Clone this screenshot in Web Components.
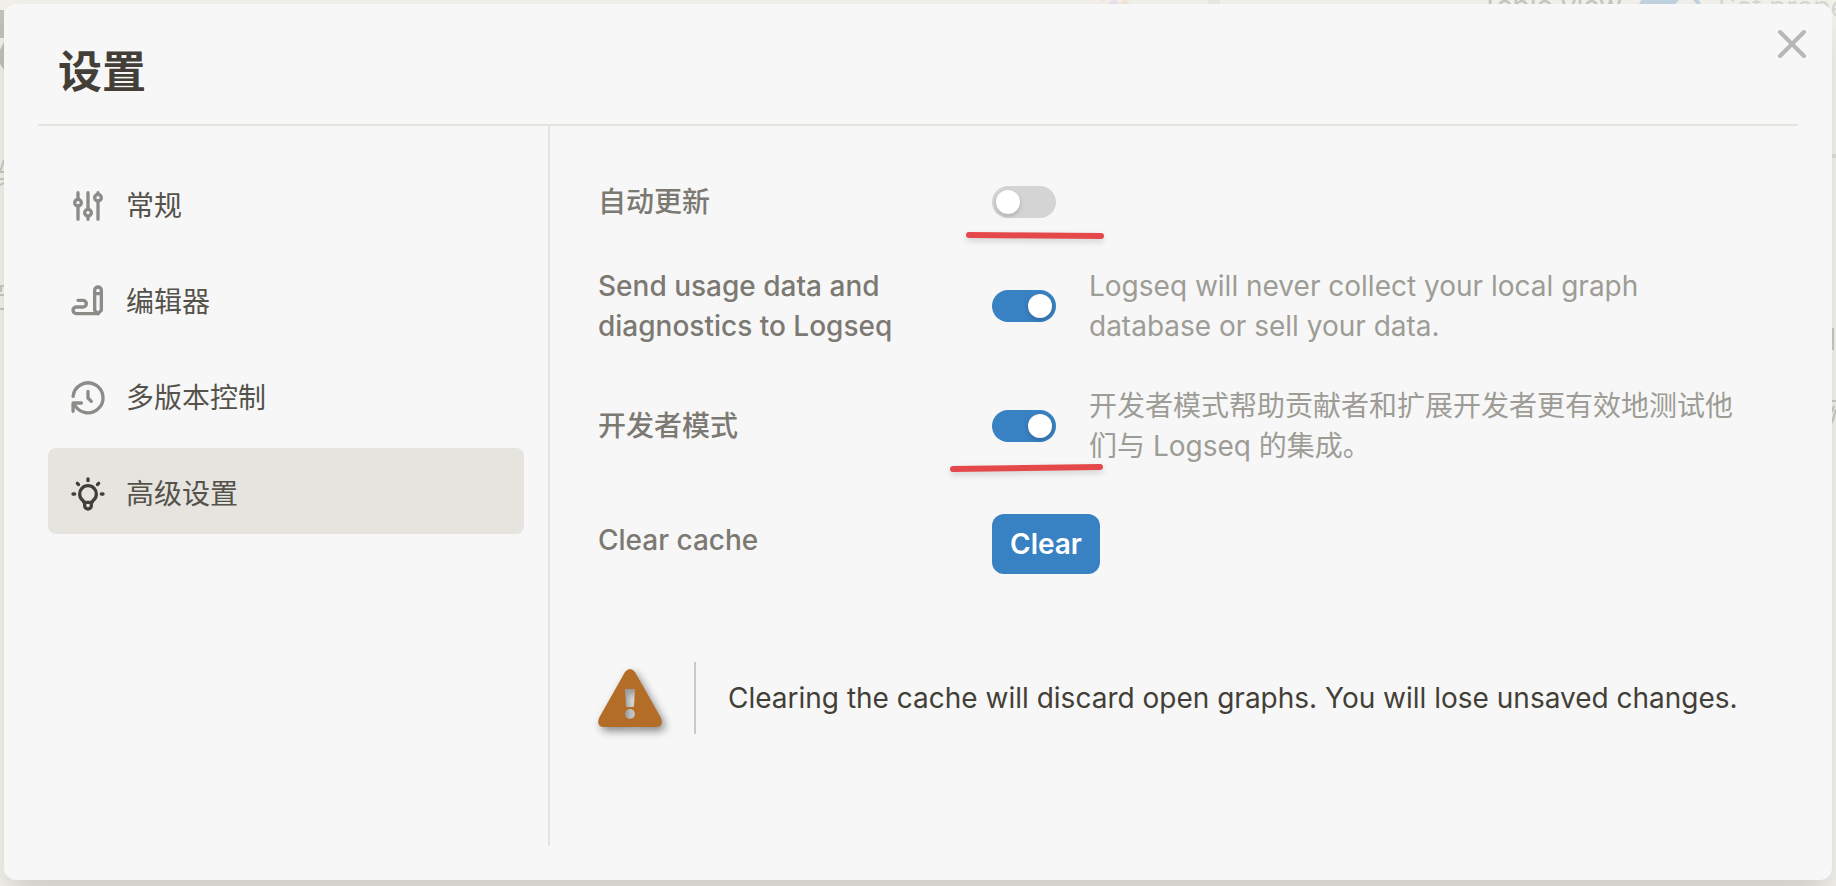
<!DOCTYPE html>
<html lang="zh-CN">
<head>
<meta charset="utf-8">
<title>设置</title>
<style>
  html, body {
    margin: 0;
    height: 100%;
    overflow: hidden;
  }

  body {
    --accent: #3881c2;
    --line: #e4e4df;
    --text: #433f38;
    --muted: #7b7972;
    background: #f1f0eb;
    color: var(--text);
    font: 28px/40px Inter, "Noto Sans CJK SC", sans-serif;
  }
</style>
</head>
<body>
<settings-app>
  <page-behind></page-behind>
  <settings-dialog heading="设置">
    <nav-item slot="nav" icon="adjustments">常规</nav-item>
    <nav-item slot="nav" icon="writing">编辑器</nav-item>
    <nav-item slot="nav" icon="history">多版本控制</nav-item>
    <nav-item slot="nav" icon="bulb" active>高级设置</nav-item>

    <setting-row label="自动更新" marker="upper"></setting-row>
    <setting-row label="Send usage data and diagnostics to Logseq" checked>Logseq will never collect your local graph database or sell your data.</setting-row>
    <setting-row label="开发者模式" marker="lower" checked>开发者模式帮助贡献者和扩展开发者更有效地测试他们与 Logseq 的集成。</setting-row>
    <action-row label="Clear cache">Clear</action-row>
    <warning-note>Clearing the cache will discard open graphs. You will lose unsaved changes.</warning-note>
  </settings-dialog>
</settings-app>

<script>
  class Base extends HTMLElement {
    constructor() {
      super();
      this.dom = this.attachShadow({ mode: "open" });
    }

    connectedCallback() {
      const template = document.createElement("template");
      template.innerHTML = this.render();
      this.dom.replaceChildren(template.content.cloneNode(true));
    }
  }

  const icons = {
    adjustments: `
      <circle cx="6" cy="10" r="2"/><path d="M6 4v4M6 12v8"/>
      <circle cx="12" cy="16" r="2"/><path d="M12 4v10M12 18v2"/>
      <circle cx="18" cy="7" r="2"/><path d="M18 4v1M18 9v11"/>`,
    writing: `
      <path d="M20 17v-12c0-1.121-.879-2-2-2s-2 .879-2 2v12l2 2 2-2z"/>
      <path d="M16 7h4M18 19h-13a2 2 0 1 1 0-4h4a2 2 0 1 0 0-4h-3"/>`,
    history: `
      <path d="M12 8v4l2 2"/>
      <path d="M3.05 11a9 9 0 1 1 .5 4m-.5 5v-5h5"/>`,
    bulb: `
      <path d="M3 12h1M12 3v1M20 12h1M5.6 5.6l.7.7M18.4 5.6l-.7.7"/>
      <path d="M9 16a5 5 0 1 1 6 0a3.5 3.5 0 0 0-1 3a2 2 0 0 1-4 0a3.5 3.5 0 0 0-1-3"/>
      <path d="M9.7 17h4.6"/>`
  };

  // hand drawn strokes under a switch
  const markers = {
    upper: { top: 40, left: -31, path: "M8 9L140 10" },
    lower: { top: 48, left: -47, path: "M8 11L155 9" }
  };

  class SettingsApp extends Base {
    render() {
      return `
        <style>
          :host {
            display: flex;
            position: relative;
            box-sizing: border-box;
            min-height: 100vh;
            padding: 4px 4px 6px;
            overflow: hidden;
          }
        </style>
        <slot></slot>
      `;
    }
  }

  // the dimmed page that shows around the dialog's edges
  class PageBehind extends Base {
    render() {
      return `
        <style>
          :host {
            position: absolute;
            inset: 0;
            overflow: hidden;
            color: #c6c5bc;
            white-space: nowrap;
          }
          span, i, svg { position: absolute; }
          .view { top: -14px; right: 214px; }
          .toggle {
            top: -6px;
            right: 134px;
            width: 64px;
            height: 32px;
            border-radius: 16px;
            background: #c0d1df;
          }
          .toggle::after {
            content: "";
            position: absolute;
            top: 4px;
            right: 4px;
            width: 24px;
            height: 24px;
            border-radius: 50%;
            background: #f0efea;
          }
          .prop { top: -13px; left: calc(100% - 118px); color: #d8d7d1; }
          .left { top: 0; left: 0; }
          .right { top: 0; right: 0; }
          .dots { top: 0; left: 1098px; }
        </style>
        <span class="view">Table view</span>
        <i class="toggle"></i>
        <span class="prop">Set property</span>
        <svg class="left" width="4" height="320" fill="none" stroke="#c9c8c2" stroke-width="2">
          <path d="M0 10h4v28h-4zM0 50l4-8v28l-4-6z" fill="#c2c1ba" stroke="none"/>
          <path d="M4 160l-4 12h4M0 179h4M0 185l4-2M0 286h4M1 286v6M0 295h4M0 309h4"/>
        </svg>
        <svg class="right" width="4" height="430" fill="none" stroke="#c9c8c2" stroke-width="2">
          <path d="M0 156h4" stroke="#dddcd8" stroke-width="4"/>
          <path d="M1 328v22M0 401h4M2 406l-2 6M0 423l4-14"/>
        </svg>
        <svg class="dots" width="122" height="4">
          <circle cx="4" cy="-3" r="4" fill="#f3e3d5"/>
          <circle cx="16" cy="5" r="5" fill="#eddeed"/>
          <circle cx="27" cy="4" r="4" fill="#f3e3d5"/>
          <path d="M110 0h12v4h-12z" fill="#e8e7e3"/>
        </svg>
      `;
    }
  }

  class SettingsDialog extends Base {
    render() {
      return `
        <style>
          :host {
            display: flex;
            flex: 1;
            flex-direction: column;
            position: relative;
            box-sizing: border-box;
            padding: 0 34px 34px;
            border-radius: 12px;
            background: #f7f7f7;
            box-shadow: 0 24px 30px -8px rgba(0, 0, 0, .12), 0 8px 24px rgba(0, 0, 0, .04);
          }
          header {
            padding: 40px 20px 24px;
            border-bottom: 2px solid var(--line);
          }
          h1 {
            margin: 0;
            font-size: 44px;
            line-height: 56px;
            font-weight: 700;
          }
          .body { display: flex; flex: 1; }
          nav {
            display: flex;
            flex-direction: column;
            gap: 10px;
            box-sizing: border-box;
            width: 512px;
            flex: none;
            padding: 34px 24px 0 10px;
            border-right: 2px solid var(--line);
          }
          main {
            display: flex;
            flex: 1;
            flex-direction: column;
            gap: 40px;
            padding: 52px 50px 0 48px;
          }
          .close {
            position: absolute;
            top: 20px;
            right: 20px;
            width: 40px;
            height: 40px;
            padding: 0;
            border: 0;
            background: none;
            color: #b7b7b7;
          }
          .close svg { display: block; }
        </style>
        <header><h1>${this.getAttribute("heading")}</h1></header>
        <div class="body">
          <nav><slot name="nav"></slot></nav>
          <main><slot></slot></main>
        </div>
        <button class="close" type="button" aria-label="Close">
          <svg width="40" height="40" viewBox="0 0 40 40" stroke="currentColor" stroke-width="4" stroke-linecap="round">
            <path d="M8 8L32 32M32 8L8 32"/>
          </svg>
        </button>
      `;
    }
  }

  class NavItem extends Base {
    render() {
      return `
        <style>
          :host { display: block; }
          a {
            display: flex;
            align-items: center;
            gap: 18px;
            padding: 26px 20px 20px;
            border-radius: 8px;
            color: #55524b;
            text-decoration: none;
          }
          svg { flex: none; color: #8c8b87; }
          :host([active]) a { background: #e5e4df; }
          :host([active]) svg { color: var(--text); }
        </style>
        <a href="#${this.getAttribute("icon")}">
          <svg width="40" height="40" viewBox="0 0 24 24" fill="none" stroke="currentColor"
            stroke-width="2" stroke-linecap="round" stroke-linejoin="round">
            ${icons[this.getAttribute("icon")]}
          </svg>
          <slot></slot>
        </a>
      `;
    }
  }

  class SettingRow extends Base {
    renderMarker() {
      const marker = markers[this.getAttribute("marker")];
      if (!marker) return "";
      return `
        <svg class="marker" style="top: ${marker.top}px; left: ${marker.left}px"
          width="170" height="24" fill="none" stroke="#e5484a" stroke-width="6" stroke-linecap="round">
          <path d="${marker.path}"/>
        </svg>
      `;
    }

    render() {
      return `
        <style>
          :host {
            display: grid;
            grid-template-columns: 394px 64px 1fr;
            align-items: center;
            min-height: 48px;
          }
          label {
            max-width: 320px;
            color: var(--muted);
            font-weight: 500;
          }
          .control { position: relative; height: 32px; }
          input {
            appearance: none;
            display: flex;
            box-sizing: border-box;
            width: 64px;
            height: 32px;
            margin: 0;
            padding: 4px;
            border-radius: 16px;
            background: #d4d4d4;
          }
          input::before {
            content: "";
            width: 24px;
            height: 24px;
            border-radius: 50%;
            background: #fff;
            box-shadow: 0 2px 4px rgba(0, 0, 0, .2);
          }
          input:checked {
            justify-content: flex-end;
            background: var(--accent);
          }
          .desc { padding-left: 33px; color: #9d9c96; }
          .marker {
            position: absolute;
            filter: drop-shadow(0 3px 3px rgba(0, 0, 0, .15));
            pointer-events: none;
          }
        </style>
        <label for="toggle">${this.getAttribute("label")}</label>
        <div class="control">
          <input id="toggle" type="checkbox" role="switch" ${this.hasAttribute("checked") ? "checked" : ""}>
          ${this.renderMarker()}
        </div>
        <div class="desc"><slot></slot></div>
      `;
    }
  }

  class ActionRow extends Base {
    render() {
      return `
        <style>
          :host {
            display: grid;
            grid-template-columns: 394px 1fr;
            align-items: start;
            padding-top: 8px;
          }
          span {
            padding-top: 6px;
            color: var(--muted);
            font-weight: 500;
          }
          button {
            justify-self: start;
            padding: 10px 18px;
            border: 0;
            border-radius: 12px;
            background: var(--accent);
            color: #fff;
            font: inherit;
            font-weight: 600;
          }
        </style>
        <span id="label">${this.getAttribute("label")}</span>
        <button type="button" aria-describedby="label"><slot></slot></button>
      `;
    }
  }

  class WarningNote extends Base {
    render() {
      return `
        <style>
          :host {
            display: flex;
            align-items: center;
            margin-top: 48px;
          }
          svg {
            flex: none;
            overflow: visible;
            filter: drop-shadow(3px 4px 4px rgba(0, 0, 0, .45));
          }
          p {
            flex: 1;
            margin: 0 -20px 0 32px;
            padding: 16px 0 16px 32px;
            border-left: 2px solid #cbcbcb;
          }
        </style>
        <svg width="64" height="58" viewBox="0 0 64 58" fill="#b36d27" fill-rule="evenodd" aria-hidden="true">
          <path d="M27 3Q32-3 37 3L63 49Q66 58 58 58H6Q-2 58 1 49ZM27 20L28 37Q28 38 29 38H35Q36 38 36 37L37 20ZM32 40a5 5 0 1 0 0 10a5 5 0 1 0 0-10Z"/>
        </svg>
        <p><slot></slot></p>
      `;
    }
  }

  customElements.define("settings-app", SettingsApp);
  customElements.define("page-behind", PageBehind);
  customElements.define("settings-dialog", SettingsDialog);
  customElements.define("nav-item", NavItem);
  customElements.define("setting-row", SettingRow);
  customElements.define("action-row", ActionRow);
  customElements.define("warning-note", WarningNote);
</script>
</body>
</html>
